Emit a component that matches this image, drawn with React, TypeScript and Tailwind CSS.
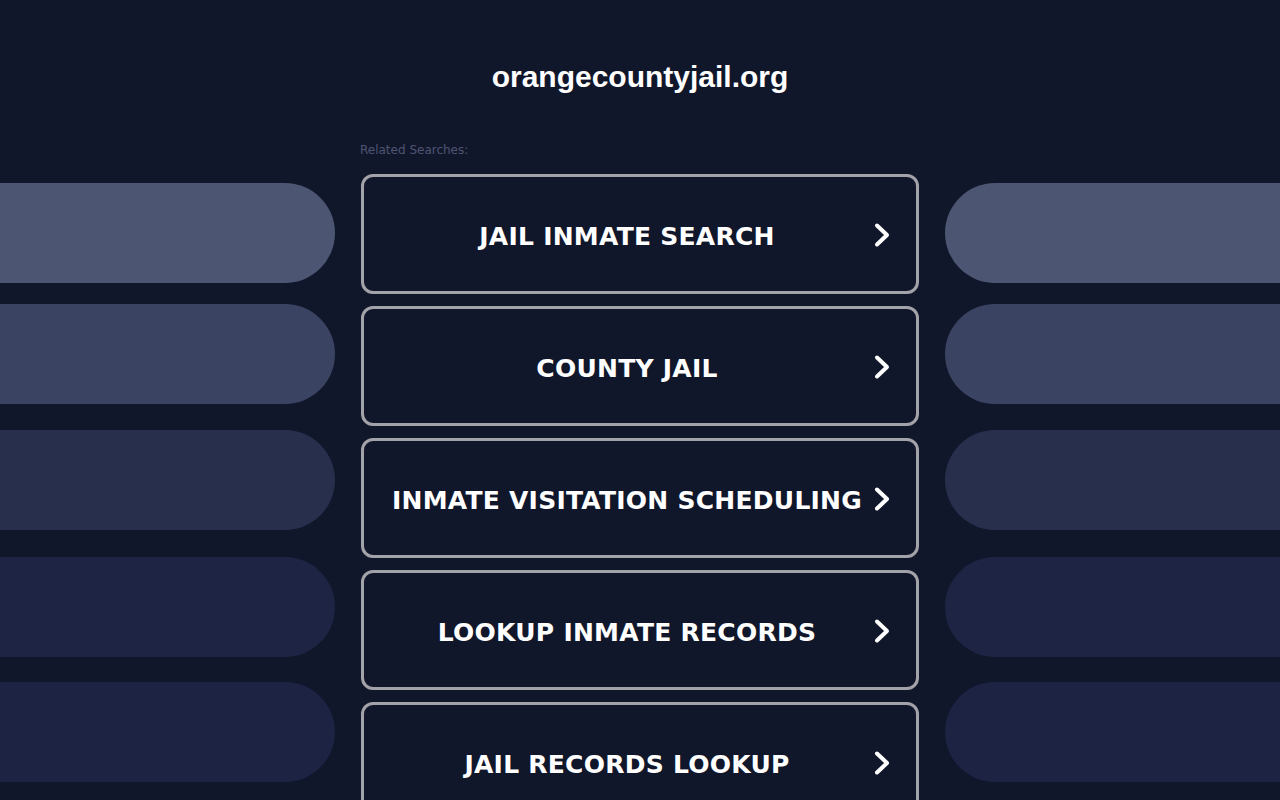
const searches = [
  'JAIL INMATE SEARCH',
  'COUNTY JAIL',
  'INMATE VISITATION SCHEDULING',
  'LOOKUP INMATE RECORDS',
  'JAIL RECORDS LOOKUP',
];

const pills = [
  { bg: 'bg-[#4c5572]', mt: 'mt-[183px]' },
  { bg: 'bg-[#3a4361]', mt: 'mt-[21px]' },
  { bg: 'bg-[#272f4c]', mt: 'mt-[26px]' },
  { bg: 'bg-[#1d2444]', mt: 'mt-[27px]' },
  { bg: 'bg-[#1c2343]', mt: 'mt-[25px]' },
];

function Chevron() {
  return (
    <svg width="18" height="26" viewBox="0 0 18 26" fill="none" className="shrink-0">
      <path d="M4 3.5 L14 13 L4 22.5" stroke="#ffffff" strokeWidth="4" strokeLinecap="round" strokeLinejoin="round" />
    </svg>
  );
}

function Pills({ side }: { side: 'left' | 'right' }) {
  return (
    <div className="flex flex-col">
      {pills.map((p, i) => (
        <div
          key={i}
          className={`${p.mt} ${p.bg} h-[100px] ${side === 'left' ? 'rounded-r-full' : 'rounded-l-full'}`}
        />
      ))}
    </div>
  );
}

export default function App() {
  return (
    <main className="min-h-screen bg-[#11172b] overflow-hidden">
      <div className="grid grid-cols-[335px_558px_335px] gap-x-[26px]">
        <Pills side="left" />

        <div className="flex flex-col">
          <h1 className="pt-[60px] text-center text-[30px] leading-[34px] font-bold text-white font-['Liberation_Sans',Arial,sans-serif]">
            orangecountyjail.org
          </h1>
          <p className="mt-[48px] -ml-px text-[12px] leading-[16px] text-[#4e5372] font-['DejaVu_Sans',Verdana,sans-serif]">
            Related Searches:
          </p>
          <div className="mt-[16px] flex flex-col gap-3">
            {searches.map((s) => (
              <a
                key={s}
                href="#"
                className="flex h-[120px] items-center gap-2 rounded-[12px] border-[3px] border-[#a2a3a8] px-[25px] pt-[2px]"
              >
                <span className="flex-1 text-center text-[25px] leading-[30px] pt-[4px] font-bold tracking-[0.25px] text-white font-['DejaVu_Sans',Verdana,sans-serif]">
                  {s}
                </span>
                <Chevron />
              </a>
            ))}
          </div>
        </div>

        <Pills side="right" />
      </div>
    </main>
  );
}
